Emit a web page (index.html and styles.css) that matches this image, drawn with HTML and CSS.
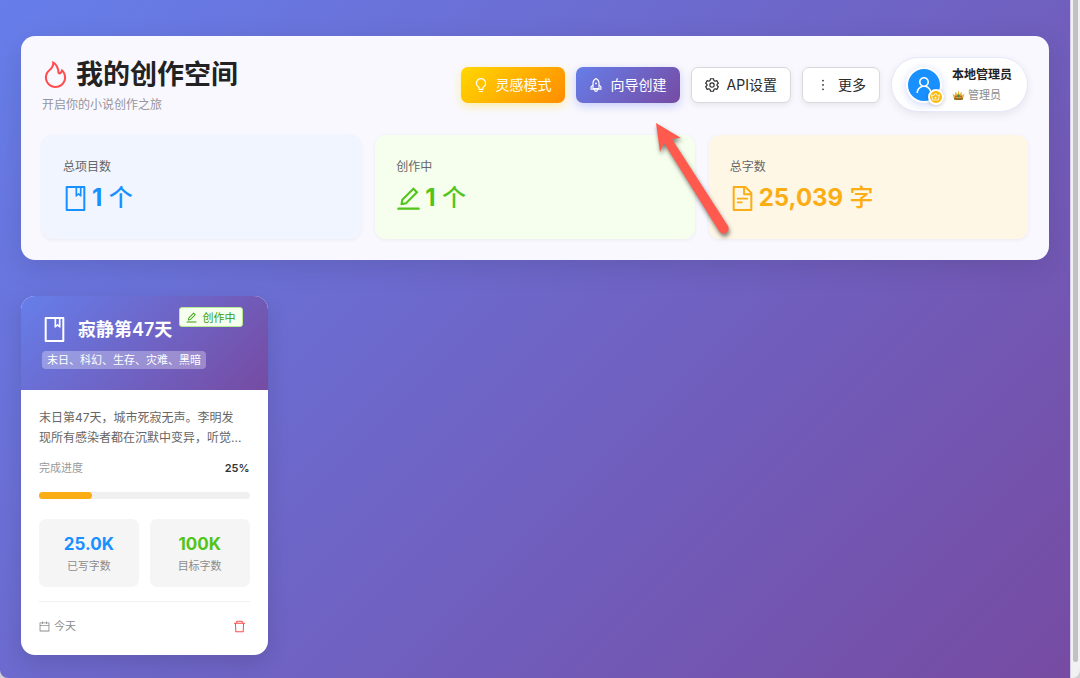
FILE: index.html
```html
<!DOCTYPE html>
<html lang="zh-CN">
<head>
<meta charset="utf-8">
<title>我的创作空间</title>
<link rel="stylesheet" href="styles.css">
</head>
<body>
<svg class="sprite" aria-hidden="true">
  <symbol id="i-fire" viewBox="64 64 896 896"><path d="M834.1 469.2A347.49 347.49 0 00751.2 354l-29.1-26.7a8.09 8.09 0 00-13 3.3l-13 37.3c-8.1 23.4-23 47.3-44.1 70.8-1.4 1.5-3 1.9-4.1 2-1.1.1-2.8-.1-4.3-1.5-1.4-1.2-2.1-3-2-4.8 3.7-60.2-14.3-128.1-53.7-202C555.3 171 510 123.1 453.4 89.7l-41.3-24.3c-5.4-3.2-12.3 1-12 7.3l2.2 48c1.5 32.8-2.3 61.8-11.3 85.9-11 29.5-26.8 56.9-47 81.5a295.64 295.64 0 01-47.5 46.1 352.6 352.6 0 00-100.3 121.5A347.75 347.75 0 00160 610c0 47.2 9.3 92.9 27.7 136a349.4 349.4 0 0075.5 110.9c32.4 32 70 57.2 111.9 74.7C418.5 949.8 464.5 959 512 959s93.5-9.2 136.9-27.3A348.6 348.6 0 00760.8 857c32.4-32 57.8-69.4 75.5-110.9a344.2 344.2 0 0027.7-136c0-48.8-10-96.2-29.9-140.9zM713 808.5c-53.7 53.2-125 82.4-201 82.4s-147.3-29.2-201-82.4c-53.5-53.1-83-123.5-83-198.4 0-43.5 9.8-85.2 29.1-124 18.8-37.9 46.8-71.8 80.8-97.9a349.6 349.6 0 0058.6-56.8c25-30.5 44.6-64.5 58.2-101a240 240 0 0012.1-46.5c24.1 22.2 44.3 49 61.2 80.4 33.4 62.6 48.8 118.3 45.8 165.7a74.01 74.01 0 0024.4 59.8 73.36 73.36 0 0053.4 18.8c19.7-1 37.8-9.7 51-24.4 13.3-14.9 24.8-30.1 34.4-45.6 14 17.9 25.7 37.4 35 58.4 15.9 35.8 24 73.9 24 113.1 0 74.9-29.5 145.4-83 198.4z"/></symbol>
  <symbol id="i-book" viewBox="64 64 896 896"><path d="M832 64H192c-17.7 0-32 14.3-32 32v832c0 17.7 14.3 32 32 32h640c17.7 0 32-14.3 32-32V96c0-17.7-14.3-32-32-32zm-260 72h96v209.9L621.5 312 572 347.4V136zm220 752H232V136h280v296.9c0 3.3 1 6.6 3 9.3a15.9 15.9 0 0022.3 3.7l83.8-59.9 81.4 59.4c2.7 2 6 3.1 9.4 3.1 8.8 0 16-7.2 16-16V136h64v752z"/></symbol>
  <symbol id="i-edit" viewBox="64 64 896 896"><path d="M257.7 752c2 0 4-.2 6-.5L431.9 722c2-.4 3.9-1.3 5.3-2.8l423.9-423.9a9.96 9.96 0 000-14.1L694.9 114.9c-1.9-1.9-4.4-2.9-7.1-2.9s-5.2 1-7.1 2.9L256.8 538.8c-1.5 1.5-2.4 3.3-2.8 5.3l-29.5 168.2a33.5 33.5 0 009.4 29.8c6.6 6.4 14.9 9.9 23.8 9.9zm67.4-174.4L687.8 215l73.3 73.3-362.7 362.6-88.9 15.7 15.6-89zM880 836H144c-17.7 0-32 14.3-32 32v36c0 4.4 3.6 8 8 8h784c4.4 0 8-3.6 8-8v-36c0-17.7-14.3-32-32-32z"/></symbol>
  <symbol id="i-file" viewBox="64 64 896 896"><path d="M854.6 288.6L639.4 73.4c-6-6-14.1-9.4-22.6-9.4H192c-17.7 0-32 14.3-32 32v832c0 17.7 14.3 32 32 32h640c17.7 0 32-14.3 32-32V311.3c0-8.5-3.4-16.7-9.4-22.7zM790.2 326H602V137.8L790.2 326zm1.8 562H232V136h302v216a42 42 0 0042 42h216v494zM504 618H320c-4.4 0-8 3.6-8 8v48c0 4.4 3.6 8 8 8h184c4.4 0 8-3.6 8-8v-48c0-4.4-3.6-8-8-8zM312 490v48c0 4.4 3.6 8 8 8h384c4.4 0 8-3.6 8-8v-48c0-4.4-3.6-8-8-8H320c-4.4 0-8 3.6-8 8z"/></symbol>
  <symbol id="i-bulb" viewBox="64 64 896 896"><path d="M632 888H392c-4.4 0-8 3.6-8 8v32c0 17.7 14.3 32 32 32h192c17.7 0 32-14.3 32-32v-32c0-4.4-3.6-8-8-8zM512 64c-181.1 0-328 146.9-328 328 0 121.4 66 227.4 164 284.1V792c0 17.7 14.3 32 32 32h264c17.7 0 32-14.3 32-32V676.1c98-56.7 164-162.7 164-284.1 0-181.1-146.9-328-328-328zm127.9 549.8L604 634.6V752H420V634.6l-35.9-20.8C305.4 568.3 256 484.5 256 392c0-141.4 114.6-256 256-256s256 114.6 256 256c0 92.5-49.4 176.3-128.1 221.8z"/></symbol>
  <symbol id="i-rocket" viewBox="64 64 896 896"><g fill="none" stroke="currentColor" stroke-width="72" stroke-linejoin="round"><path d="M320 736V384c0-120 70-220 192-284 122 64 192 164 192 284v352z"/><path d="M320 510L196 640v140h632V640L704 510"/><path d="M410 790c0 80 40 130 102 130s102-50 102-130"/></g><circle cx="512" cy="410" r="58"/></symbol>
  <symbol id="i-setting" viewBox="64 64 896 896"><g fill="none" stroke="currentColor" stroke-width="72" stroke-linejoin="round"><path d="M415 110h194l28 118 68 40 116-36 97 168-88 82v60l88 82-97 168-116-36-68 40-28 118H415l-28-118-68-40-116 36-97-168 88-82v-60l-88-82 97-168 116 36 68-40z"/><circle cx="512" cy="512" r="140"/></g></symbol>
  <symbol id="i-more" viewBox="64 64 896 896"><path d="M456 231a56 56 0 10112 0 56 56 0 10-112 0zm0 280a56 56 0 10112 0 56 56 0 10-112 0zm0 280a56 56 0 10112 0 56 56 0 10-112 0z"/></symbol>
  <symbol id="i-user" viewBox="64 64 896 896"><path d="M858.5 763.6a374 374 0 00-80.6-119.5 375.63 375.63 0 00-119.5-80.6c-.4-.2-.8-.3-1.2-.5C719.5 518 760 444.7 760 362c0-137-111-248-248-248S264 225 264 362c0 82.7 40.5 156 102.8 201.1-.4.2-.8.3-1.2.5-44.8 18.9-85 46-119.5 80.6a375.63 375.63 0 00-80.6 119.5A371.7 371.7 0 00136 901.8a8 8 0 008 8.2h60c4.4 0 7.9-3.5 8-7.8 2-77.2 33-149.5 87.8-204.3 56.7-56.7 132-87.9 212.2-87.9s155.5 31.2 212.2 87.9C779 752.7 810 825 812 902.2c.1 4.4 3.6 7.8 8 7.8h60a8 8 0 008-8.2c-1-47.8-10.9-94.3-29.5-138.2zM512 534c-45.9 0-89.1-17.9-121.6-50.4S340 407.9 340 362c0-45.9 17.9-89.1 50.4-121.6S466.1 190 512 190s89.1 17.9 121.6 50.4S684 316.1 684 362c0 45.9-17.9 89.1-50.4 121.6S557.9 534 512 534z"/></symbol>
  <symbol id="i-crown" viewBox="64 64 896 896"><g fill="none" stroke="currentColor" stroke-width="84" stroke-linejoin="round"><path d="M220 860L120 340l210 90 182-270 182 270 210-90-100 520z"/><circle cx="512" cy="640" r="70"/></g></symbol>
  <symbol id="i-calendar" viewBox="64 64 896 896"><path d="M880 184H712v-64c0-4.4-3.6-8-8-8h-56c-4.4 0-8 3.6-8 8v64H384v-64c0-4.4-3.6-8-8-8h-56c-4.4 0-8 3.6-8 8v64H144c-17.7 0-32 14.3-32 32v664c0 17.7 14.3 32 32 32h736c17.7 0 32-14.3 32-32V216c0-17.7-14.3-32-32-32zm-40 656H184V460h656v380zM184 392V256h128v48c0 4.4 3.6 8 8 8h56c4.4 0 8-3.6 8-8v-48h256v48c0 4.4 3.6 8 8 8h56c4.4 0 8-3.6 8-8v-48h128v136H184z"/></symbol>
  <symbol id="i-delete" viewBox="64 64 896 896"><path d="M360 184h-8c4.4 0 8-3.6 8-8v8h304v-8c0 4.4 3.6 8 8 8h-8v72h72v-80c0-35.3-28.7-64-64-64H352c-35.3 0-64 28.7-64 64v80h72v-72zm504 72H160c-17.7 0-32 14.3-32 32v32c0 4.4 3.6 8 8 8h60.4l24.7 523c1.6 34.1 29.8 61 63.9 61h454c34.2 0 62.3-26.8 63.9-61l24.7-523H888c4.4 0 8-3.6 8-8v-32c0-17.7-14.3-32-32-32zM731.3 840H292.7l-24.2-512h487l-24.2 512z"/></symbol>
</svg>

<div class="window">
  <main class="page">
    <section class="hero">
      <header class="hero-head">
        <div class="hero-text">
          <h1><svg class="icon"><use href="#i-fire"/></svg>我的创作空间</h1>
          <p>开启你的小说创作之旅</p>
        </div>
        <div class="actions">
          <button type="button" class="btn btn-gold"><svg class="icon"><use href="#i-bulb"/></svg>灵感模式</button>
          <button type="button" class="btn btn-primary"><svg class="icon"><use href="#i-rocket"/></svg>向导创建</button>
          <button type="button" class="btn"><svg class="icon"><use href="#i-setting"/></svg>API设置</button>
          <button type="button" class="btn"><svg class="icon"><use href="#i-more"/></svg>更多</button>
          <button type="button" class="user">
            <span class="avatar">
              <svg class="icon"><use href="#i-user"/></svg>
              <span class="avatar-badge"><svg class="icon"><use href="#i-crown"/></svg></span>
            </span>
            <span class="user-text">
              <span class="user-name">本地管理员</span>
              <span class="user-role">
                <svg class="crown" viewBox="0 0 26 22">
                  <path fill="#e3b33c" d="M4 20L1 9l5 4 1-8 4 6 2-9 2 9 4-6 1 8 5-4-3 11q-9 3-18 0z"/>
                  <path fill="#94691c" d="M4 17q9 3 18 0v4q-9 2-18 0z"/>
                  <circle cx="13" cy="14" r="3" fill="#3a8f4c"/>
                  <circle cx="8" cy="15" r="2" fill="#c8503c"/>
                  <circle cx="18" cy="15" r="2" fill="#c8503c"/>
                </svg>管理员</span>
            </span>
          </button>
        </div>
      </header>

      <div class="stats">
        <div class="stat stat-blue">
          <div class="stat-label">总项目数</div>
          <div class="stat-value"><svg class="icon"><use href="#i-book"/></svg><span><b>1</b> 个</span></div>
        </div>
        <div class="stat stat-green">
          <div class="stat-label">创作中</div>
          <div class="stat-value"><svg class="icon"><use href="#i-edit"/></svg><span><b>1</b> 个</span></div>
        </div>
        <div class="stat stat-orange">
          <div class="stat-label">总字数</div>
          <div class="stat-value"><svg class="icon"><use href="#i-file"/></svg><span><b>25,039</b> 字</span></div>
        </div>
      </div>
    </section>

    <section class="projects">
      <article class="project">
        <span class="status"><svg class="icon"><use href="#i-edit"/></svg>创作中</span>
        <header class="project-head">
          <h2><svg class="icon"><use href="#i-book"/></svg>寂静第47天</h2>
          <span class="genre">末日、科幻、生存、灾难、黑暗</span>
        </header>
        <div class="project-body">
          <p class="desc">末日第47天，城市死寂无声。李明发<br>现所有感染者都在沉默中变异，听觉...</p>
          <div class="progress-head"><span>完成进度</span><strong>25%</strong></div>
          <div class="progress"><div class="progress-fill" style="width: 25%"></div></div>
          <div class="counts">
            <div class="count"><b class="blue">25.0K</b><span>已写字数</span></div>
            <div class="count"><b class="green">100K</b><span>目标字数</span></div>
          </div>
          <footer class="project-foot">
            <span class="date"><svg class="icon"><use href="#i-calendar"/></svg>今天</span>
            <button type="button" class="delete" aria-label="删除"><svg class="icon"><use href="#i-delete"/></svg></button>
          </footer>
        </div>
      </article>
    </section>
  </main>
  <div class="scrollbar"><div class="thumb"></div></div>

  <svg class="arrow" viewBox="0 0 90 120" aria-hidden="true">
    <path d="M6 3L31 18L22 19L78 106Q80 111 76 113Q72 115 69 111L14 23L10 32Z"/>
  </svg>
</div>
</body>
</html>
```
FILE: styles.css
```css
* { box-sizing: border-box; }

body {
  margin: 0;
  background: #d0d0d4;
  color: #222;
  font-family: Inter, "Noto Sans CJK SC", sans-serif;
  font-size: 12px;
}

h1, h2, p { margin: 0; }

button {
  font-family: inherit;
  cursor: pointer;
}

.sprite {
  position: absolute;
  width: 0;
  height: 0;
}

.icon {
  width: 1em;
  height: 1em;
  flex: none;
  fill: currentColor;
}

.window {
  position: relative;
  display: flex;
  min-height: 100vh;
  border-radius: 0 0 8px 8px;
  overflow: hidden;
}

.page {
  flex: 1;
  padding: 36px 21px 22px;
  background: linear-gradient(135deg, #667eea 0%, #764ba2 100%);
}

/* scrollbar */
.scrollbar {
  display: flex;
  width: 10px;
  padding: 0 2px 16px 2px;
  background: #f1f1f3;
  border-left: 1px solid #d8cfe6;
}
.thumb {
  flex: 1;
  border-radius: 0 0 3px 3px;
  background: #c1c1c1;
}

/* top panel */
.hero {
  padding: 21px;
  border-radius: 14px;
  background: #f9f8fe;
  box-shadow: 0 7px 28px rgba(0, 0, 0, .1);
}
.hero-head {
  display: flex;
  align-items: flex-start;
  justify-content: space-between;
  margin-bottom: 19px;
}
.hero-text h1 {
  display: flex;
  align-items: center;
  gap: 7px;
  margin-bottom: 2px;
  font-size: 27px;
  font-weight: 600;
  line-height: 35px;
}
.hero-text h1 .icon { color: #ff4d4f; }
.hero-text p {
  color: #96959b;
  line-height: 22px;
}

.actions {
  display: flex;
  align-items: center;
  gap: 11px;
}
.btn {
  display: flex;
  align-items: center;
  gap: 8px;
  height: 36px;
  padding: 0 13px;
  border: 1px solid #d9d9d9;
  border-radius: 7px;
  background: #fff;
  color: #2b2b2b;
  font-size: 14px;
  line-height: 20px;
  white-space: nowrap;
  box-shadow: 0 2px 6px rgba(0, 0, 0, .08);
}
.btn-gold {
  border: 0;
  background: linear-gradient(135deg, #ffd700 0%, #ff8c00 100%);
  color: #fff;
  box-shadow: 0 3px 10px rgba(255, 215, 0, .35);
}
.btn-primary {
  border: 0;
  background: linear-gradient(135deg, #667eea 0%, #764ba2 100%);
  color: #fff;
  box-shadow: 0 3px 10px rgba(102, 126, 234, .35);
}

.user {
  display: flex;
  align-items: center;
  gap: 10px;
  height: 55px;
  padding: 0 15px 0 14px;
  border: 1px solid #e6e8fb;
  border-radius: 28px;
  background: #fff;
  box-shadow: 0 3px 10px rgba(0, 0, 0, .08);
  text-align: left;
}
.avatar {
  position: relative;
  display: flex;
  align-items: center;
  justify-content: center;
  width: 36px;
  height: 36px;
  border: 2px solid #fff;
  border-radius: 50%;
  background: #1890ff;
  color: #fff;
  font-size: 18px;
  box-shadow: 0 2px 8px rgba(102, 126, 234, .3);
}
.avatar-badge {
  position: absolute;
  right: -4px;
  bottom: -4px;
  display: flex;
  align-items: center;
  justify-content: center;
  width: 16px;
  height: 16px;
  border: 2px solid #fff;
  border-radius: 50%;
  background: #fbb90a;
  font-size: 9px;
  box-shadow: 0 1px 4px rgba(0, 0, 0, .2);
}
.user-text {
  display: flex;
  flex-direction: column;
  line-height: 20px;
}
.user-name {
  color: #222;
  font-size: 12px;
  font-weight: 600;
}
.user-role {
  display: flex;
  align-items: center;
  gap: 3px;
  color: #8c8c8c;
  font-size: 11px;
}
.crown {
  width: 13px;
  height: 11px;
}

/* totals */
.stats {
  display: grid;
  grid-template-columns: repeat(3, 1fr);
  gap: 14px;
}
.stat {
  padding: 21px;
  border-radius: 11px;
  box-shadow: 0 1px 4px rgba(0, 0, 0, .06);
}
.stat-blue { background: #f0f5ff; color: #1890ff; }
.stat-green { background: #f6ffed; color: #52c41a; }
.stat-orange { background: #fff7e6; color: #faad14; }
.stat-label {
  color: #666;
  line-height: 22px;
}
.stat-value {
  display: flex;
  align-items: center;
  gap: 4px;
  font-size: 24px;
  font-weight: 500;
  line-height: 40px;
}
.stat-value .icon { font-size: 25px; }

/* project cards */
.projects {
  display: grid;
  grid-template-columns: repeat(auto-fill, minmax(240px, 1fr));
  gap: 14px;
  margin-top: 36px;
}
.project {
  position: relative;
  border-radius: 14px;
  background: #fff;
  overflow: hidden;
  box-shadow: 0 7px 22px rgba(0, 0, 0, .12);
}
.project-head {
  padding: 21px;
  background: linear-gradient(135deg, #667eea 0%, #764ba2 100%);
  color: #fff;
}
.project-head h2 {
  display: flex;
  align-items: center;
  gap: 11px;
  margin-bottom: 9px;
  font-size: 18px;
  font-weight: 600;
  line-height: 25px;
}
.project-head .icon { font-size: 25px; }
.genre {
  display: block;
  width: max-content;
  padding: 0 5px;
  border-radius: 4px;
  background: rgba(255, 255, 255, .3);
  font-size: 11px;
  line-height: 18px;
}
.status {
  position: absolute;
  top: 11px;
  right: 25px;
  display: flex;
  align-items: center;
  gap: 6px;
  height: 20px;
  padding: 0 6px;
  border: 1px solid #b7eb8f;
  border-radius: 3px;
  background: #f6ffed;
  color: #389e0d;
  font-size: 11px;
}

.project-body { padding: 18px; }
.desc {
  margin-bottom: 10px;
  color: #666;
  font-size: 12px;
  line-height: 20px;
  white-space: nowrap;
}
.progress-head {
  display: flex;
  justify-content: space-between;
  margin-bottom: 14px;
  color: #999;
  font-size: 11px;
  line-height: 20px;
}
.progress-head strong {
  color: #333;
  font-weight: 600;
}
.progress {
  height: 7px;
  margin-bottom: 20px;
  border-radius: 4px;
  background: #f0f0f0;
}
.progress-fill {
  height: 100%;
  border-radius: 4px;
  background: #faad14;
}
.counts {
  display: grid;
  grid-template-columns: 1fr 1fr;
  gap: 11px;
}
.count {
  display: flex;
  flex-direction: column;
  padding: 12px 0;
  border-radius: 7px;
  background: #f5f5f5;
  color: #8c8c8c;
  font-size: 11px;
  line-height: 18px;
  text-align: center;
}
.count b {
  font-size: 17px;
  font-weight: 700;
  line-height: 26px;
}
.blue { color: #1890ff; }
.green { color: #52c41a; }

.project-foot {
  display: flex;
  align-items: center;
  justify-content: space-between;
  margin-top: 14px;
  padding-top: 13px;
  border-top: 1px solid #f0f0f0;
}
.date {
  display: flex;
  align-items: center;
  gap: 4px;
  color: #8c8c8c;
  font-size: 11px;
  line-height: 22px;
}
.delete {
  display: flex;
  padding: 4px;
  border: 0;
  background: none;
  color: #ff4d4f;
  font-size: 13px;
}

/* pointer laid over the panel */
.arrow {
  position: absolute;
  left: 650px;
  top: 120px;
  width: 90px;
  height: 120px;
  fill: #ff5a4d;
  filter: drop-shadow(1px 3px 2px rgba(0, 0, 0, .5));
  pointer-events: none;
}
```
